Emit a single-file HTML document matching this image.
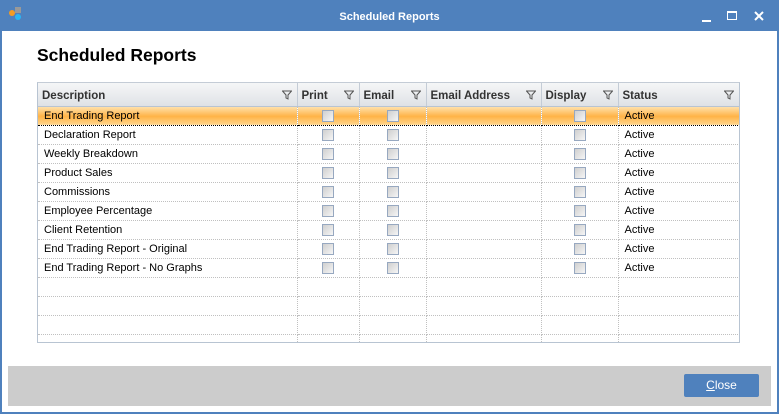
<!DOCTYPE html>
<html><head><style>
*{margin:0;padding:0;box-sizing:border-box}
body{width:779px;height:414px;background:#fff;font-family:"Liberation Sans",sans-serif;position:relative;overflow:hidden}
.win{position:absolute;left:0;top:0;width:779px;height:414px;border:2px solid #4f81bd;border-top:none;background:#fff}
.tb{position:absolute;left:0;top:0;width:779px;height:31px;background:#4f81bd;color:#fff;font-size:11px;font-weight:bold;text-align:center;line-height:34px}
h1{position:absolute;left:37px;top:45px;font-size:17.5px;font-weight:bold;color:#000}
.grid{position:absolute;left:37px;top:82px;width:703px;height:261px;border:1px solid #b8c4d2;border-top:1px solid #c4ccd6;overflow:hidden}
table{border-collapse:collapse;table-layout:fixed;width:701px;font-size:11px}
th{height:23px;background:linear-gradient(#f5f6f7,#dfe2e6);border-right:1px solid #c4ccd6;border-bottom:1px solid #b8c4d2;text-align:left;padding-left:4px;padding-top:3px;color:#333;font-weight:bold;position:relative;font-size:11.5px}
th svg{position:absolute;right:5px;top:7px}
td{height:19px;border-right:1px dotted #c0c0c0;border-bottom:1px dotted #c0c0c0;padding-left:6px;color:#000;white-space:nowrap;overflow:hidden}
tr.sel td{background:linear-gradient(#ffe3b0,#ffb347 55%,#ffd48a);border-top:1px dotted #000;border-bottom:1px dotted #000}
td.c{text-align:center;padding:0}
.cb{display:inline-block;width:12px;height:12px;border:1px solid #97a8c0;background:linear-gradient(135deg,#cfcfcf,#f6f6f6);vertical-align:middle}
.bot{position:absolute;left:8px;top:366px;width:763px;height:40px;background:#cccccc}
.btn{position:absolute;left:684px;top:374px;width:75px;height:23px;background:#4f81bd;border-radius:2px;color:#fff;font-size:12px;text-align:center;line-height:23px}
</style></head><body>
<div class="win"></div>
<div class="tb">Scheduled Reports
<div style="position:absolute;left:9px;top:10px;width:6px;height:6px;border-radius:3px;background:#f39c24"></div>
<div style="position:absolute;left:15px;top:7px;width:6px;height:6px;background:#999"></div>
<div style="position:absolute;left:15px;top:14px;width:6px;height:6px;border-radius:3px;background:#29b6f6"></div>
<div style="position:absolute;left:702px;top:20px;width:9px;height:2px;background:#fff"></div>
<div style="position:absolute;left:727px;top:11px;width:10px;height:9px;border:1px solid #fff;border-top-width:2px"></div>
<svg style="position:absolute;left:754px;top:11px" width="10" height="10"><path d="M1 1L9 9M9 1L1 9" stroke="#fff" stroke-width="2"/></svg>
</div>
<h1>Scheduled Reports</h1>
<div class="grid"><table>
<colgroup><col style="width:259px"><col style="width:62px"><col style="width:67px"><col style="width:115px"><col style="width:77px"><col style="width:121px"></colgroup>
<tr><th>Description<svg width="10" height="10"><path d="M0.5 1H9.5L6 5V9L4 8V5Z" fill="none" stroke="#555"/></svg></th><th>Print<svg width="10" height="10"><path d="M0.5 1H9.5L6 5V9L4 8V5Z" fill="none" stroke="#555"/></svg></th><th>Email<svg width="10" height="10"><path d="M0.5 1H9.5L6 5V9L4 8V5Z" fill="none" stroke="#555"/></svg></th><th>Email Address<svg width="10" height="10"><path d="M0.5 1H9.5L6 5V9L4 8V5Z" fill="none" stroke="#555"/></svg></th><th>Display<svg width="10" height="10"><path d="M0.5 1H9.5L6 5V9L4 8V5Z" fill="none" stroke="#555"/></svg></th><th>Status<svg width="10" height="10"><path d="M0.5 1H9.5L6 5V9L4 8V5Z" fill="none" stroke="#555"/></svg></th></tr>
<tr class="sel"><td>End Trading Report</td><td class="c"><span class="cb"></span></td><td class="c"><span class="cb"></span></td><td></td><td class="c"><span class="cb"></span></td><td>Active</td></tr>
<tr><td>Declaration Report</td><td class="c"><span class="cb"></span></td><td class="c"><span class="cb"></span></td><td></td><td class="c"><span class="cb"></span></td><td>Active</td></tr>
<tr><td>Weekly Breakdown</td><td class="c"><span class="cb"></span></td><td class="c"><span class="cb"></span></td><td></td><td class="c"><span class="cb"></span></td><td>Active</td></tr>
<tr><td>Product Sales</td><td class="c"><span class="cb"></span></td><td class="c"><span class="cb"></span></td><td></td><td class="c"><span class="cb"></span></td><td>Active</td></tr>
<tr><td>Commissions</td><td class="c"><span class="cb"></span></td><td class="c"><span class="cb"></span></td><td></td><td class="c"><span class="cb"></span></td><td>Active</td></tr>
<tr><td>Employee Percentage</td><td class="c"><span class="cb"></span></td><td class="c"><span class="cb"></span></td><td></td><td class="c"><span class="cb"></span></td><td>Active</td></tr>
<tr><td>Client Retention</td><td class="c"><span class="cb"></span></td><td class="c"><span class="cb"></span></td><td></td><td class="c"><span class="cb"></span></td><td>Active</td></tr>
<tr><td>End Trading Report - Original</td><td class="c"><span class="cb"></span></td><td class="c"><span class="cb"></span></td><td></td><td class="c"><span class="cb"></span></td><td>Active</td></tr>
<tr><td>End Trading Report - No Graphs</td><td class="c"><span class="cb"></span></td><td class="c"><span class="cb"></span></td><td></td><td class="c"><span class="cb"></span></td><td>Active</td></tr>
<tr><td></td><td></td><td></td><td></td><td></td><td></td></tr>
<tr><td></td><td></td><td></td><td></td><td></td><td></td></tr>
<tr><td></td><td></td><td></td><td></td><td></td><td></td></tr>
<tr><td></td><td></td><td></td><td></td><td></td><td></td></tr>
</table></div>
<div class="bot"></div>
<div class="btn"><u>C</u>lose</div>
</body></html>
